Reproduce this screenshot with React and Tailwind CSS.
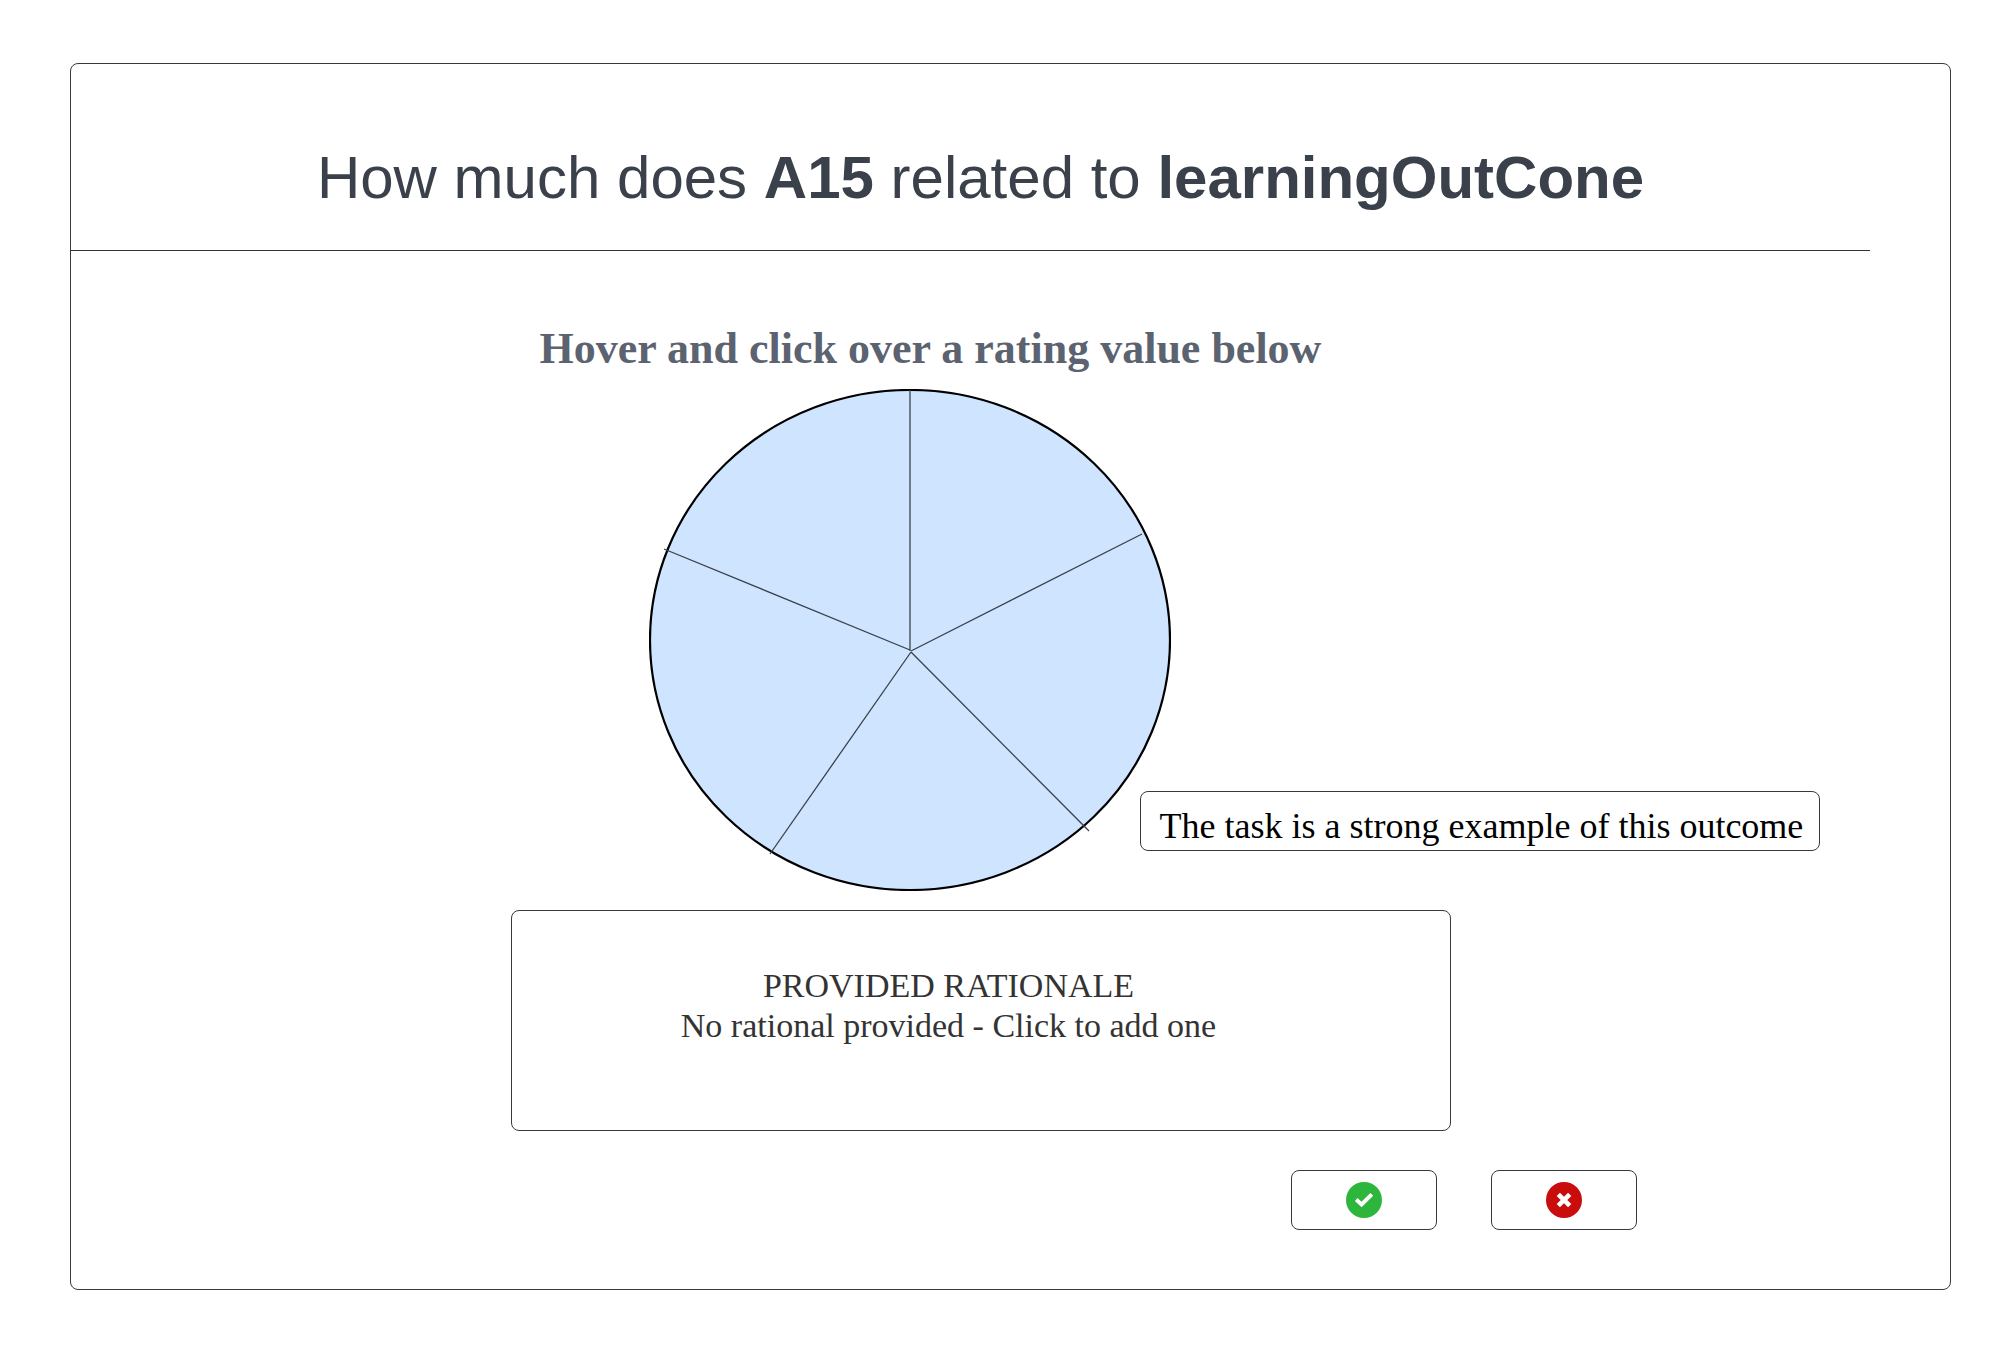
const SERIF = "font-['Liberation_Serif',serif]";

function RatingWheel() {
  return (
    <svg
      viewBox="0 0 522 502"
      className="block w-full"
      role="img"
      aria-label="Rating wheel with five values"
    >
      <ellipse cx="261" cy="251" rx="260" ry="250" fill="#cfe4ff" stroke="#000000" strokeWidth="2.2" />
      <g stroke="#3a414a" strokeWidth="1.3" fill="none">
        <path d="M261 1V262" />
        <path d="M262 262L493 145" />
        <path d="M262 263L440 442" />
        <path d="M262 263L121 465" />
        <path d="M261 261L15 160" />
      </g>
    </svg>
  );
}

function CheckCircle() {
  return (
    <svg viewBox="0 0 36 36" className="size-9" aria-hidden="true">
      <circle cx="18" cy="18" r="18" fill="#2eb53b" />
      <path d="M10.2 17.6L15.6 22.4L25.8 12.4" fill="none" stroke="#ffffff" strokeWidth="4" />
    </svg>
  );
}

function CrossCircle() {
  return (
    <svg viewBox="0 0 36 36" className="size-9" aria-hidden="true">
      <circle cx="18" cy="18" r="18" fill="#c90d0d" />
      <path d="M12.3 12.3L23.7 23.7M23.7 12.3L12.3 23.7" fill="none" stroke="#ffffff" strokeWidth="4.6" />
    </svg>
  );
}

function ActionButton({ label, children }) {
  return (
    <button
      type="button"
      aria-label={label}
      className="flex h-[60px] w-[146px] items-center justify-center rounded-lg border border-[#3a3a3a] bg-white"
    >
      {children}
    </button>
  );
}

export default function App() {
  return (
    <main className="min-h-screen bg-white pt-[63px] pr-[54px] pb-[54px] pl-[70px]">
      <section className="rounded-lg border border-[#3a3a3a] pb-[59px]">
        <header className="mr-20 border-b border-[#333333] pt-[84px] pb-[42px] pl-5">
          <h1 className="text-center font-['Liberation_Sans',sans-serif] text-[60px] leading-[60px] text-[#3a414a]">
            How much does <strong>A15</strong> related to <strong>learningOutCone</strong>
          </h1>
        </header>

        <div className="mr-[60px]">
          <div className={`mx-auto flex max-w-[1312px] flex-col items-center ${SERIF}`}>
            <h2 className="mt-[76px] mr-[100px] text-[44px] leading-[44px] font-bold text-[#5c6370]">
              Hover and click over a rating value below
            </h2>

            <div className="relative mt-[18px] mr-[142px] w-[522px]">
              <RatingWheel />
              <div
                role="tooltip"
                className="absolute top-[402px] left-[491px] flex h-[60px] items-center rounded-lg border border-[#3a3a3a] bg-white pt-[9px] pr-4 pl-[19px] text-[36px] leading-[40px] whitespace-nowrap text-black"
              >
                The task is a strong example of this outcome
              </div>
            </div>

            <button
              type="button"
              className="mt-[19px] w-full max-w-[940px] rounded-lg border border-[#3a3a3a] bg-white pt-[55px] pr-[64px] pb-[84px] text-center text-[34px] leading-[40px] text-[#333333]"
            >
              <span className="block">PROVIDED RATIONALE</span>
              <span className="block">No rational provided - Click to add one</span>
            </button>

            <div className="mt-[39px] flex gap-[54px] self-end">
              <ActionButton label="Confirm rating">
                <CheckCircle />
              </ActionButton>
              <ActionButton label="Cancel rating">
                <CrossCircle />
              </ActionButton>
            </div>
          </div>
        </div>
      </section>
    </main>
  );
}
